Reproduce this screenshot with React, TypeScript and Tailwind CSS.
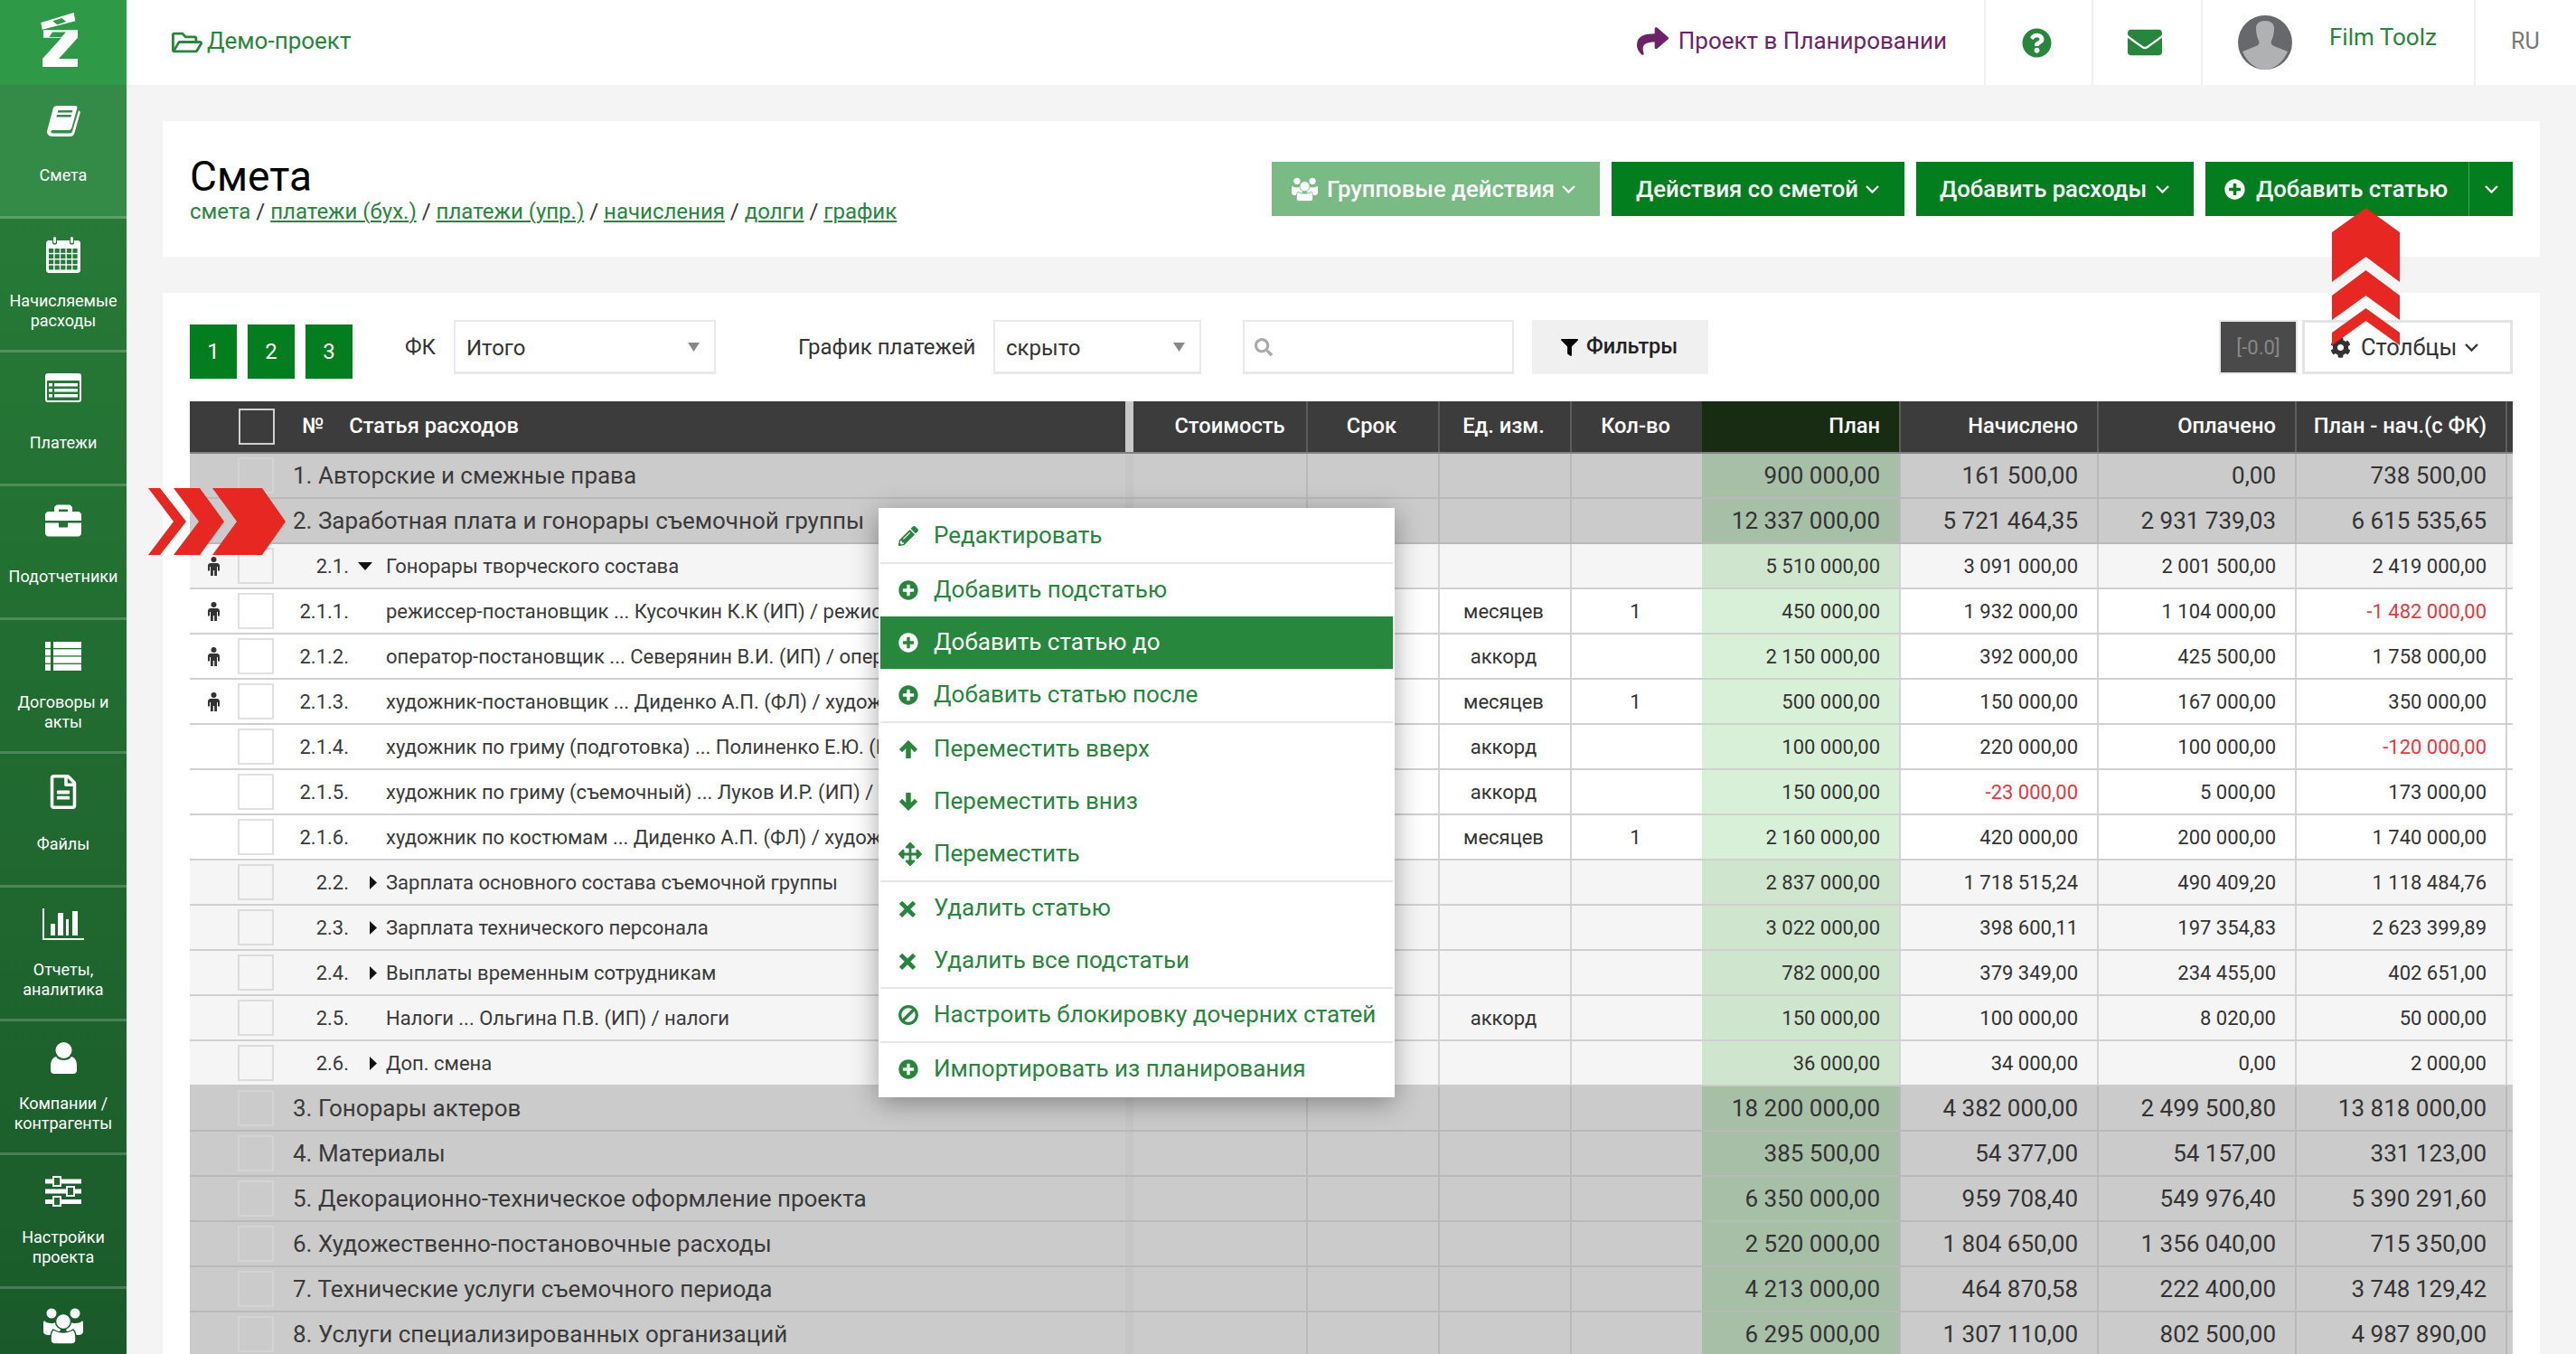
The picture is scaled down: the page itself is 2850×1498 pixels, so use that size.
import React from "react";
import { FaBriefcase, FaRegFileAlt, FaRegFolderOpen, FaShare, FaQuestionCircle, FaEnvelope, FaPlusCircle, FaFilter, FaSearch, FaCog, FaPencilAlt, FaArrowsAlt } from "react-icons/fa";

const GRID = "grid grid-cols-[1035px_9px_191px_146px_146px_146px_218px_219px_219px_233px_8px]";

function Chevron({ className }: { className?: string }) {
  return (
    <svg width="15" height="9" viewBox="0 0 15 9" className={className} fill="none" stroke="currentColor" strokeWidth="2.400">
      <path d="M1 1l6.500 6.500L14 1" />
    </svg>
  );
}

function PersonIcon() {
  return (
    <svg width="13" height="21" viewBox="0 0 13 21" fill="#333">
      <circle cx="6.500" cy="3" r="3" />
      <path d="M3 7h7c1.700 0 3 1.300 3 3v5.500h-2V11h-1v10H7.200v-6H5.800v6H3V11H2v4.500H0V10c0-1.700 1.300-3 3-3z" />
    </svg>
  );
}

function BookIcon() {
  return (
    <svg width="37" height="34" viewBox="0 0 37 34" fill="white" fillRule="evenodd">
      <path d="M11 0h20c2 0 2.800 1.400 2.300 3l-6 21.500c-.5 1.600-1.600 2.500-3.200 2.500H7c-2.200 0-3.200 1.200-2.400 2.400.5.800 1.300 1 2.400 1h18c1.500 0 2.600-.7 3-2.200L35 5.200c1.400.6 2 1.400 1.600 2.800l-6.200 22.300c-.6 2.200-2.400 3.700-4.600 3.700H6C2 34-.8 31 .2 27.400L6.400 4C7 1.600 8.800 0 11 0zM12.400 5l-.7 2.400h16l.7-2.400zM11 10l-.7 2.400h16l.7-2.400z" />
    </svg>
  );
}

function CalendarIcon() {
  const cells: React.ReactNode[] = [];
  for (let r = 0; r < 4; r++)
    for (let c = 0; c < 5; c++)
      cells.push(<rect key={r + "-" + c} x={3 + c * 6.6} y={13 + r * 6.2} width="5.200" height="4.800" fill="#26793a" />);
  return (
    <svg width="38" height="40" viewBox="0 0 38 40" fill="white">
      <path d="M3 4h4v3c0 2 5 2 5 0V4h14v3c0 2 5 2 5 0V4h4c1.600 0 3 1.400 3 3v30c0 1.600-1.400 3-3 3H3c-1.600 0-3-1.400-3-3V7c0-1.600 1.400-3 3-3z" />
      <rect x="8" y="0" width="3" height="7" rx="1.500" />
      <rect x="27" y="0" width="3" height="7" rx="1.500" />
      {cells}
    </svg>
  );
}

function ListAltIcon() {
  return (
    <svg width="40" height="32" viewBox="0 0 40 32">
      <rect width="40" height="32" rx="3" fill="white" />
      <rect x="2" y="8" width="36" height="22" rx="1" fill="#25773a" />
      <g fill="white">
        <rect x="4" y="11" width="4" height="3.500" />
        <rect x="10" y="11" width="26" height="3.500" />
        <rect x="4" y="17" width="4" height="3.500" />
        <rect x="10" y="17" width="26" height="3.500" />
        <rect x="4" y="23" width="4" height="3.500" />
        <rect x="10" y="23" width="26" height="3.500" />
      </g>
    </svg>
  );
}

function ListIcon() {
  return (
    <svg width="40" height="32" viewBox="0 0 40 32" fill="white">
      {[0, 8.3, 16.6, 24.9].map((y) => (
        <g key={y}>
          <rect x="0" y={y} width="6" height="7" />
          <rect x="9" y={y} width="31" height="7" />
        </g>
      ))}
    </svg>
  );
}

function ChartIcon() {
  return (
    <svg width="46" height="35" viewBox="0 0 46 35" fill="white">
      <path d="M0 0h2v33h44v2H0z" />
      <rect x="9" y="17" width="5" height="13" />
      <rect x="17" y="5" width="6" height="25" />
      <rect x="26" y="12" width="3" height="18" />
      <rect x="33" y="3" width="6" height="27" />
    </svg>
  );
}

function UserIcon() {
  return (
    <svg width="29" height="35" viewBox="0 0 29 35" fill="white">
      <circle cx="14.500" cy="9" r="9" />
      <path d="M6 16c2 3 5 4 8.500 4s6.500-1 8.500-4c4 1 6 5 6 10v5c0 2.500-1.500 4-4 4H4c-2.500 0-4-1.500-4-4v-5c0-5 2-9 6-10z" />
    </svg>
  );
}

function SlidersIcon() {
  return (
    <svg width="40" height="34" viewBox="0 0 40 34" fill="white">
      <rect x="0" y="3.500" width="40" height="5" />
      <rect x="0" y="14.500" width="40" height="5" />
      <rect x="0" y="26" width="40" height="5" />
      <rect x="9" y="1" width="8" height="10" fill="#1f6a31" stroke="white" strokeWidth="2" />
      <rect x="24" y="12" width="8" height="10" fill="#1f6a31" stroke="white" strokeWidth="2" />
      <rect x="9" y="23" width="8" height="10" fill="#1f6a31" stroke="white" strokeWidth="2" />
    </svg>
  );
}

function UsersIcon({ w, h, cut }: { w: number; h: number; cut: string }) {
  return (
    <svg width={w} height={h} viewBox="0 0 44 40" fill="white">
      <circle cx="9" cy="6" r="5.500" />
      <circle cx="35" cy="6" r="5.500" />
      <path d="M1 14c1 2 4 3 8 3s5-1 8-3l5 4-6 12H6c-3 0-6-1-6-4V16z" />
      <path d="M43 14c-1 2-4 3-8 3s-5-1-8-3l-5 4 6 12h10c3 0 6-1 6-4V16z" />
      <circle cx="22" cy="15" r="8.500" stroke={cut} strokeWidth="1.500" />
      <path d="M11 24c3 2 6 3 11 3s8-1 11-3c2 2 3 5 3 9v3c0 2-2 4-4 4H12c-2 0-4-2-4-4v-3c0-4 1-7 3-9z" stroke={cut} strokeWidth="1.500" />
    </svg>
  );
}

function Logo() {
  return (
    <svg width="44" height="62" viewBox="0 0 44 62">
      <path d="M.3 12L36.700 1l1.600 9.300L1.700 19.700z" fill="white" />
      <path d="M13.300 10.300L23.300 7l5 4-10 3.300z" fill="#2e9a48" />
      <path d="M3 20.300h38v8.400L20 52h21v9H2v-9l21-23.300H3z" fill="white" />
      <path d="M13 22.500h15l-5 5.500H9.500z" fill="#2e9a48" />
    </svg>
  );
}

const NAV = [
  { icon: <BookIcon />, label: ["Смета"], active: true, y: "" },
  { icon: <CalendarIcon />, label: ["Начисляемые", "расходы"], y: "" },
  { icon: <ListAltIcon />, label: ["Платежи"], y: "pb-[2px]" },
  { icon: <FaBriefcase size={40} color="white" />, label: ["Подотчетники"], y: "pb-[4px]" },
  { icon: <ListIcon />, label: ["Договоры и", "акты"], y: "" },
  { icon: <FaRegFileAlt size={38} color="white" />, label: ["Файлы"], y: "pt-[4px]" },
  { icon: <ChartIcon />, label: ["Отчеты,", "аналитика"], y: "" },
  { icon: <UserIcon />, label: ["Компании /", "контрагенты"], y: "" },
  { icon: <SlidersIcon />, label: ["Настройки", "проекта"], y: "" },
  { icon: <UsersIcon w={44} h={40} cut="#1b5c2b" />, label: [], y: "pt-[2px]" },
];

function Sidebar() {
  return (
    <aside className="flex h-[1498px] w-[140px] shrink-0 flex-col overflow-hidden bg-gradient-to-b from-[#298039] to-[#1a5a2a]">
      <div className="flex h-[94px] shrink-0 items-start justify-center bg-[#2e9a48] pt-[13px] pr-[6px]">
        <Logo />
      </div>
      {NAV.map((n, i) => (
        <div
          key={i}
          className={
            "flex h-[148px] shrink-0 flex-col items-center border-b-[3px] border-[#ffffff33] " + (n.active ? "bg-[#348a47]" : "")
          }
        >
          <div className={"flex h-[80px] w-full shrink-0 items-center justify-center " + n.y}>{n.icon}</div>
          <div
            className={
              "flex h-[44px] flex-col items-center justify-center text-center text-[18px] leading-[22px] text-white " +
              (n.label.length === 1 ? "pb-[5px]" : "")
            }
          >
            {n.label.map((l) => (
              <span key={l} className="whitespace-nowrap">
                {l}
              </span>
            ))}
          </div>
        </div>
      ))}
    </aside>
  );
}

function Avatar() {
  return (
    <svg width="60" height="60" viewBox="0 0 60 60">
      <circle cx="30" cy="30" r="30" fill="#67686b" />
      <path d="M20 14c0-5 4-8 10-8s10 3 10 8c0 6-1 10-3 14-1 3 0 5 3 6l15 6c-5 12-15 20-25 20S10 52 5 40l15-6c3-1 4-3 3-6-2-4-3-8-3-14z" fill="#b0b1b3" />
    </svg>
  );
}

function TopBar() {
  return (
    <header className="flex h-[94px] shrink-0 items-center bg-white">
      <a className="ml-[50px] flex items-center gap-[5px] text-[26px] text-[#27853c]">
        <FaRegFolderOpen size={34} />
        <span className="mb-[3px]">Демо-проект</span>
      </a>
      <div className="ml-auto flex h-full items-center">
        <div className="flex items-center gap-[11px] pr-[41px] text-[26px] text-[#6b2468]">
          <FaShare size={35} className="mb-[3px]" />
          <span className="mb-[3px]">Проект в Планировании</span>
        </div>
        <div className="flex h-full w-[119px] items-center justify-center border-l-2 border-[#f0f0f0] pr-[4px] text-[#27853c]">
          <FaQuestionCircle size={33} />
        </div>
        <div className="flex h-full w-[121px] items-center justify-center border-l-2 border-[#f0f0f0] pr-[5px] text-[#27853c]">
          <FaEnvelope size={38} />
        </div>
        <div className="flex h-full w-[302px] items-center border-l-2 border-[#f0f0f0] pl-[39px]">
          <Avatar />
          <span className="mb-[12px] ml-[41px] text-[26px] text-[#27853c]">Film Toolz</span>
        </div>
        <div className="flex h-full w-[113px] items-center border-l-2 border-[#f0f0f0] pl-[39px] text-[25px] text-[#777]">
          <span className="mb-[3px]">RU</span>
        </div>
      </div>
    </header>
  );
}

const GREEN = "bg-[#027e1e]";

function GButton({ children, className }: { children: React.ReactNode; className: string }) {
  return <button className={"flex h-[60px] items-center text-[25.700px] font-medium text-white " + className}>{children}</button>;
}

function TitleCard() {
  const sep = <span className="text-[#333]"> / </span>;
  const link = "underline decoration-[2px] underline-offset-[2px]";
  return (
    <section className="mx-[40px] mt-[40px] flex h-[150px] shrink-0 items-center justify-between bg-white px-[30px]">
      <div>
        <h1 className="text-[46px] leading-[50px] text-black">Смета</h1>
        <div className="text-[24px] leading-[28px] text-[#27853c]">
          смета{sep}
          <a className={link}>платежи (бух.)</a>
          {sep}
          <a className={link}>платежи (упр.)</a>
          {sep}
          <a className={link}>начисления</a>
          {sep}
          <a className={link}>долги</a>
          {sep}
          <a className={link}>график</a>
        </div>
      </div>
      <div className="flex items-center gap-[13px]">
        <GButton className="w-[363px] bg-[#7aba84] pl-[22px]">
          <UsersIcon w={29} h={27} cut="#7aba84" />
          <span className="ml-[10px]">Групповые действия</span>
          <Chevron className="ml-[8px]" />
        </GButton>
        <GButton className={"w-[324px] pl-[27px] " + GREEN}>
          <span>Действия со сметой</span>
          <Chevron className="ml-[8px]" />
        </GButton>
        <GButton className={"w-[307px] pl-[26px] " + GREEN}>
          <span>Добавить расходы</span>
          <Chevron className="ml-[10px]" />
        </GButton>
        <GButton className={"w-[340px] pl-[21px] " + GREEN}>
          <FaPlusCircle size={23} />
          <span className="ml-[12px] w-[235px] text-left">Добавить статью</span>
          <span className="h-full border-l border-[#4aa060]" />
          <Chevron className="ml-[17px]" />
        </GButton>
      </div>
    </section>
  );
}

function Caret() {
  return (
    <svg width="13" height="10" viewBox="0 0 13 10" className="ml-auto" fill="#888">
      <path d="M0 0h13L6.500 10z" />
    </svg>
  );
}

function Toolbar() {
  const num = "mt-[5px] flex h-[60px] w-[52px] items-center justify-center text-[24px] text-white " + GREEN;
  const box = "flex h-[60px] items-center border-2 border-b-[3px] border-[#e8e8ee] bg-white text-[24px] text-[#333]";
  return (
    <div className="flex h-[60px] items-start">
      <div className={num}>1</div>
      <div className={"ml-[12px] " + num}>2</div>
      <div className={"ml-[12px] " + num}>3</div>
      <span className="ml-[58px] w-[34px] self-center text-[24px] text-[#333]">ФК</span>
      <div className={"ml-[20px] w-[290px] pr-[16px] pl-[12px] " + box}>
        <span className="mt-[2px]">Итого</span>
        <Caret />
      </div>
      <span className="ml-[91px] w-[196px] self-center whitespace-nowrap text-[24px] text-[#333]">График платежей</span>
      <div className={"ml-[20px] w-[230px] pr-[16px] pl-[12px] " + box}>
        <span className="mt-[2px]">скрыто</span>
        <Caret />
      </div>
      <div className={"ml-[46px] w-[300px] pl-[11px] " + box}>
        <FaSearch size={20} color="#aaa" />
      </div>
      <button className="ml-[20px] flex h-[60px] w-[195px] items-center bg-[#f0f0f0] pl-[32px] text-[23.500px] font-medium text-[#222]">
        <FaFilter size={19} className="mr-[9px] text-black" />
        Фильтры
      </button>
      <div className="mt-[2px] ml-auto flex h-[56px] w-[83px] items-center justify-center bg-[#4a4a4a] text-[22px] text-[#888] shadow-[0_0_0_2px_#e8e8e8]">
        [-0.0]
      </div>
      <button className="ml-[7px] flex h-[60px] w-[233px] items-center border-[3px] border-[#e4e4e4] bg-white pl-[28px] text-[25.500px] text-[#333]">
        <FaCog size={23} />
        <span className="ml-[11px]">Столбцы</span>
        <Chevron className="ml-[9px]" />
      </button>
    </div>
  );
}

type Row = {
  kind: "group" | "sub" | "leaf";
  no: string;
  text: string;
  person?: boolean;
  tri?: "open" | "closed";
  unit?: string;
  qty?: string;
  v: [string, string, string, string];
};

const ROWS: Row[] = [
  { kind: "group", no: "1.", text: "Авторские и смежные права", v: ["900 000,00", "161 500,00", "0,00", "738 500,00"] },
  { kind: "group", no: "2.", text: "Заработная плата и гонорары съемочной группы", v: ["12 337 000,00", "5 721 464,35", "2 931 739,03", "6 615 535,65"] },
  { kind: "sub", no: "2.1.", tri: "open", person: true, text: "Гонорары творческого состава", v: ["5 510 000,00", "3 091 000,00", "2 001 500,00", "2 419 000,00"] },
  { kind: "leaf", no: "2.1.1.", person: true, text: "режиссер-постановщик ... Кусочкин К.К (ИП) / режиссер-постановщик", unit: "месяцев", qty: "1", v: ["450 000,00", "1 932 000,00", "1 104 000,00", "-1 482 000,00"] },
  { kind: "leaf", no: "2.1.2.", person: true, text: "оператор-постановщик ... Северянин В.И. (ИП) / оператор-постановщик", unit: "аккорд", v: ["2 150 000,00", "392 000,00", "425 500,00", "1 758 000,00"] },
  { kind: "leaf", no: "2.1.3.", person: true, text: "художник-постановщик ... Диденко А.П. (ФЛ) / художник-постановщик", unit: "месяцев", qty: "1", v: ["500 000,00", "150 000,00", "167 000,00", "350 000,00"] },
  { kind: "leaf", no: "2.1.4.", text: "художник по гриму (подготовка) ... Полиненко Е.Ю. (ИП) / художник по гриму", unit: "аккорд", v: ["100 000,00", "220 000,00", "100 000,00", "-120 000,00"] },
  { kind: "leaf", no: "2.1.5.", text: "художник по гриму (съемочный) ... Луков И.Р. (ИП) / художник по гриму", unit: "аккорд", v: ["150 000,00", "-23 000,00", "5 000,00", "173 000,00"] },
  { kind: "leaf", no: "2.1.6.", text: "художник по костюмам ... Диденко А.П. (ФЛ) / художник по костюмам", unit: "месяцев", qty: "1", v: ["2 160 000,00", "420 000,00", "200 000,00", "1 740 000,00"] },
  { kind: "sub", no: "2.2.", tri: "closed", text: "Зарплата основного состава съемочной группы", v: ["2 837 000,00", "1 718 515,24", "490 409,20", "1 118 484,76"] },
  { kind: "sub", no: "2.3.", tri: "closed", text: "Зарплата технического персонала", v: ["3 022 000,00", "398 600,11", "197 354,83", "2 623 399,89"] },
  { kind: "sub", no: "2.4.", tri: "closed", text: "Выплаты временным сотрудникам", v: ["782 000,00", "379 349,00", "234 455,00", "402 651,00"] },
  { kind: "sub", no: "2.5.", text: "Налоги ... Ольгина П.В. (ИП) / налоги", unit: "аккорд", v: ["150 000,00", "100 000,00", "8 020,00", "50 000,00"] },
  { kind: "sub", no: "2.6.", tri: "closed", text: "Доп. смена", v: ["36 000,00", "34 000,00", "0,00", "2 000,00"] },
  { kind: "group", no: "3.", text: "Гонорары актеров", v: ["18 200 000,00", "4 382 000,00", "2 499 500,80", "13 818 000,00"] },
  { kind: "group", no: "4.", text: "Материалы", v: ["385 500,00", "54 377,00", "54 157,00", "331 123,00"] },
  { kind: "group", no: "5.", text: "Декорационно-техническое оформление проекта", v: ["6 350 000,00", "959 708,40", "549 976,40", "5 390 291,60"] },
  { kind: "group", no: "6.", text: "Художественно-постановочные расходы", v: ["2 520 000,00", "1 804 650,00", "1 356 040,00", "715 350,00"] },
  { kind: "group", no: "7.", text: "Технические услуги съемочного периода", v: ["4 213 000,00", "464 870,58", "222 400,00", "3 748 129,42"] },
  { kind: "group", no: "8.", text: "Услуги специализированных организаций", v: ["6 295 000,00", "1 307 110,00", "802 500,00", "4 987 890,00"] },
];

function HeaderRow() {
  const cell = "flex items-center justify-center border-l-2 border-[#5c5c5c] pr-[3px] text-[23.700px] font-medium text-white";
  const right = "flex items-center justify-end border-l-2 border-[#5c5c5c] pr-[21px] text-[23.700px] font-medium text-white";
  return (
    <div className={GRID + " h-[58px] border-b-2 border-[#808080] bg-[#3c3c3c]"}>
      <div className="flex items-center text-[23.700px] font-medium text-white">
        <div className="ml-[54px] h-[40px] w-[40px] border-2 border-[#d0d0d0]" />
        <span className="ml-[30px]">№</span>
        <span className="ml-[28px]">Статья расходов</span>
      </div>
      <div className="bg-[#c8c8c8]" />
      <div className="flex items-center justify-center pl-[22px] text-[23.700px] font-medium text-white">Стоимость</div>
      <div className={cell}>Срок</div>
      <div className={cell}>Ед. изм.</div>
      <div className={cell}>Кол-во</div>
      <div className="flex items-center justify-end bg-[#172c13] pr-[21px] text-[23.700px] font-medium text-white">План</div>
      <div className={right}>Начислено</div>
      <div className={right}>Оплачено</div>
      <div className={right}>План - нач.(с ФК)</div>
      <div className="border-l-2 border-[#5c5c5c]" />
    </div>
  );
}

function TableRow({ r, last }: { r: Row; last: boolean }) {
  const s = {
    group: { bg: "bg-[#cbcbcb]", b: "border-[#b9b9b9]", v: "border-[#b9b9b9]", g: "bg-[#a7bfa7]", f: "text-[26px]", gap: "bg-[#c6c6c6]", box: "border-[#d4d4d4]" },
    sub: { bg: "bg-[#f5f5f5]", b: last ? "border-[#cbcbcb]" : "border-[#d0d0d0]", v: "border-[#d4d4d4]", g: "bg-[#cfe5cd]", f: "text-[22px]", gap: "bg-[#eeeeee]", box: "border-[#dcdcdc]" },
    leaf: { bg: "bg-white", b: "border-[#d0d0d0]", v: "border-[#d4d4d4]", g: "bg-[#d9f0d8]", f: "text-[22px]", gap: "bg-[#eeeeee]", box: "border-[#e0e0e0]" },
  }[r.kind];
  const num = (t: string, extra: string) => (
    <div className={"flex items-center justify-end pr-[21px] " + s.f + " " + (t.startsWith("-") ? "text-[#e2393f] " : "text-[#333] ") + extra}>{t}</div>
  );
  return (
    <div className={GRID + " h-[50px] border-b-2 " + s.bg + " " + s.b}>
      <div className={"flex items-center overflow-hidden whitespace-nowrap text-[#3a3a3a] " + s.f}>
        <div className="flex w-[53px] shrink-0 justify-center">{r.person && <PersonIcon />}</div>
        <div className={"h-[40px] w-[40px] shrink-0 border-2 " + s.box} />
        {r.kind === "group" ? (
          <span className="ml-[21px]">
            {r.no} {r.text}
          </span>
        ) : (
          <>
            <span className="w-[83px] shrink-0 text-right">{r.no}</span>
            <span className="flex w-[41px] shrink-0 justify-center">
              {r.tri === "open" && (
                <svg width="16" height="9" viewBox="0 0 16 9" className="mr-[5px]">
                  <path d="M0 0h16L8 9z" fill="#111" />
                </svg>
              )}
              {r.tri === "closed" && (
                <svg width="8" height="15" viewBox="0 0 8 15" className="ml-[13px]">
                  <path d="M0 0l8 7.500L0 15z" fill="#111" />
                </svg>
              )}
            </span>
            <span>{r.text}</span>
          </>
        )}
      </div>
      <div className={s.gap} />
      <div />
      <div className={"flex items-center justify-center border-l-2 " + s.v} />
      <div className={"flex items-center justify-center border-l-2 pr-[3px] text-[22px] text-[#333] " + s.v}>{r.unit}</div>
      <div className={"flex items-center justify-center border-l-2 pr-[3px] text-[22px] text-[#333] " + s.v}>{r.qty}</div>
      {num(r.v[0], s.g)}
      {num(r.v[1], "border-l-2 " + s.v)}
      {num(r.v[2], "border-l-2 " + s.v)}
      {num(r.v[3], "border-l-2 " + s.v)}
      <div className={"border-l-2 " + s.v} />
    </div>
  );
}

function MI({ d, w = 22 }: { d: string; w?: number }) {
  return (
    <svg width={w} height={w} viewBox="0 0 24 24" fill="currentColor">
      <path d={d} />
    </svg>
  );
}
const UP = "M12 1l11 11-3.500 3.500L15 11v12H9V11l-4.500 4.500L1 12z";
const DOWN = "M12 23L1 12l3.500-3.500L9 13V1h6v12l4.500-4.500L23 12z";
const X = "M5 2l7 7 7-7 4 4-7 7 7 7-4 4-7-7-7 7-4-4 7-7-7-7z";
function Ban() {
  return (
    <svg width="22" height="22" viewBox="0 0 22 22" fill="none" stroke="currentColor" strokeWidth="3.200">
      <circle cx="11" cy="11" r="9.300" />
      <path d="M4.500 17.500l13-13" />
    </svg>
  );
}

const MENU: ({ icon: React.ReactNode; text: string; active?: boolean } | "sep")[] = [
  { icon: <FaPencilAlt size={22} />, text: "Редактировать" },
  "sep",
  { icon: <FaPlusCircle size={22} />, text: "Добавить подстатью" },
  { icon: <FaPlusCircle size={22} />, text: "Добавить статью до", active: true },
  { icon: <FaPlusCircle size={22} />, text: "Добавить статью после" },
  "sep",
  { icon: <MI d={UP} />, text: "Переместить вверх" },
  { icon: <MI d={DOWN} />, text: "Переместить вниз" },
  { icon: <FaArrowsAlt size={26} />, text: "Переместить" },
  "sep",
  { icon: <MI d={X} w={20} />, text: "Удалить статью" },
  { icon: <MI d={X} w={20} />, text: "Удалить все подстатьи" },
  "sep",
  { icon: <Ban />, text: "Настроить блокировку дочерних статей" },
  "sep",
  { icon: <FaPlusCircle size={22} />, text: "Импортировать из планирования" },
];

function ContextMenu() {
  return (
    <div className="absolute top-[562px] left-[972px] z-20 w-[571px] bg-white p-[2px] shadow-[0_6px_28px_rgba(0,0,0,0.35)]">
      {MENU.map((m, i) =>
        m === "sep" ? (
          <div key={i} className="h-[2px] bg-[#e5e5e5]" />
        ) : (
          <div key={i} className={"flex h-[58px] items-center text-[26px] " + (m.active ? "bg-[#27873c] text-white" : "text-[#27853c]")}>
            <span className="flex w-[59px] shrink-0 pl-[20px]">{m.icon}</span>
            <span className="mb-[1px]">{m.text}</span>
          </div>
        )
      )}
    </div>
  );
}

function Arrows() {
  return (
    <>
      <svg className="absolute top-[540px] left-[164px] z-10" width="153" height="74" viewBox="0 0 153 74" fill="#e62722">
        <path d="M0 0h13l29 37-29 37H0l28-37z" />
        <path d="M28 0h29l27 37-27 37H28l28-37z" />
        <path d="M71 0h55l26 37-26 37H71l27-37z" />
      </svg>
      <svg className="absolute top-[230px] left-[2580px] z-10" width="75" height="152" viewBox="0 0 75 152" fill="#e62722">
        <path d="M37.500 0L75 27v55L37.500 54 0 82V27z" />
        <path d="M37.500 69L75 97v27L37.500 97 0 124V97z" />
        <path d="M37.500 111L75 138v14L37.500 125 0 152v-14z" />
      </svg>
    </>
  );
}

export default function App() {
  return (
    <div className="relative flex h-[1498px] w-[2850px] overflow-hidden bg-[#f4f4f4] font-['Roboto',sans-serif]">
      <Sidebar />
      <main className="flex min-w-0 flex-1 flex-col">
        <TopBar />
        <TitleCard />
        <section className="mx-[40px] mt-[40px] flex-1 shrink-0 bg-white px-[30px] pt-[30px]">
          <Toolbar />
          <div className="mt-[30px]">
            <HeaderRow />
            {ROWS.map((r) => (
              <TableRow key={r.no} r={r} last={r.no === "2.6."} />
            ))}
          </div>
        </section>
      </main>
      <ContextMenu />
      <Arrows />
    </div>
  );
}
